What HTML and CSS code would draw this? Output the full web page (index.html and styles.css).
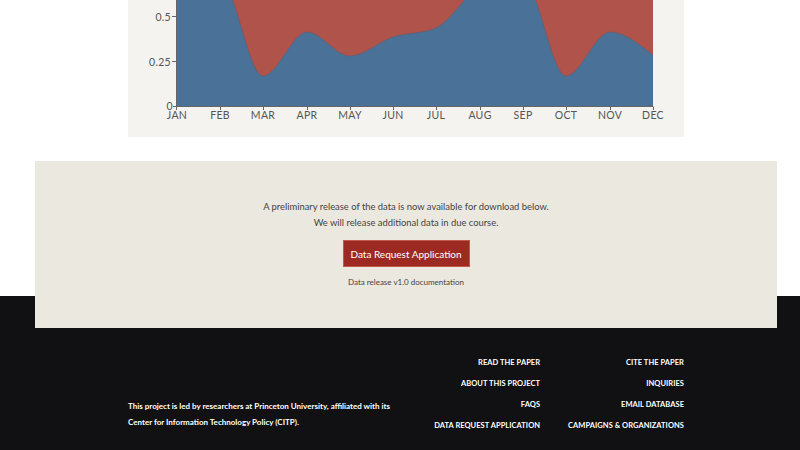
FILE: index.html
```html
<!DOCTYPE html>
<html lang="en">
<head>
<meta charset="utf-8">
<title>Data release</title>
<link rel="stylesheet" href="styles.css">
</head>
<body>
<div class="page">
  <section class="chart-card">
    <svg class="chart" width="556" height="137" viewBox="128 0 556 137" xmlns="http://www.w3.org/2000/svg">
      <rect x="177" y="0" width="476" height="106" fill="#b0534a"/>
      <path fill="#4a7197" d="M177,106 L177,-18 C191.3,-19 205.7,-20 220,-20 C234.3,-20 248.7,76 263,76 C277.7,76 292.3,32 307,32 C321.3,32 335.7,56 350,56 C364.3,56 378.7,41.6 393,37 C407.3,32.4 421.7,34 436,28 C450.7,21.8 465.3,-6.4 480,-12 C494.3,-17.4 508.7,-20 523,-20 C537.3,-20 551.7,76 566,76 C580.7,76 595.3,32 610,32 C624.3,32 638.7,43.5 653,55 L653,106 Z"/>
      <path fill="none" stroke="#6a5a6a" stroke-opacity="0.6" stroke-width="1" d="M177,-18 C191.3,-19 205.7,-20 220,-20 C234.3,-20 248.7,76 263,76 C277.7,76 292.3,32 307,32 C321.3,32 335.7,56 350,56 C364.3,56 378.7,41.6 393,37 C407.3,32.4 421.7,34 436,28 C450.7,21.8 465.3,-6.4 480,-12 C494.3,-17.4 508.7,-20 523,-20 C537.3,-20 551.7,76 566,76 C580.7,76 595.3,32 610,32 C624.3,32 638.7,43.5 653,55"/>
      <g stroke="#666" stroke-width="1" fill="none">
        <path d="M176.5,0 V106.5 H653"/>
        <path d="M172,16.5 H176.5 M172,61.5 H176.5 M173,106.5 H176.5"/>
        <path d="M176.5,106.5 V110 M220.5,106.5 V110 M263.5,106.5 V110 M307.5,106.5 V110 M350.5,106.5 V110 M393.5,106.5 V110 M436.5,106.5 V110 M480.5,106.5 V110 M523.5,106.5 V110 M566.5,106.5 V110 M610.5,106.5 V110 M653.5,106.5 V110"/>
      </g>
      <g class="ytick" text-anchor="end">
        <text x="171" y="20.5">0.5</text>
        <text x="171" y="65.5">0.25</text>
        <text x="173" y="109.5">0</text>
      </g>
      <g class="xtick" text-anchor="middle">
        <text x="177" y="118.5">JAN</text>
        <text x="220" y="118.5">FEB</text>
        <text x="263" y="118.5">MAR</text>
        <text x="307" y="118.5">APR</text>
        <text x="350" y="118.5">MAY</text>
        <text x="393" y="118.5">JUN</text>
        <text x="436" y="118.5">JUL</text>
        <text x="480" y="118.5">AUG</text>
        <text x="523" y="118.5">SEP</text>
        <text x="566" y="118.5">OCT</text>
        <text x="610" y="118.5">NOV</text>
        <text x="653" y="118.5">DEC</text>
      </g>
    </svg>
  </section>

  <section class="release">
    <p class="lead">A preliminary release of the data is now available for download below.<br>We will release additional data in due course.</p>
    <a class="btn" href="#">Data Request Application</a>
    <a class="doc" href="#">Data release v1.0 documentation</a>
  </section>
</div>

<footer class="footer">
  <div class="footer-inner">
    <p class="about">This project is led by researchers at Princeton University, affiliated with its<br>Center for Information Technology Policy (CITP).</p>
    <nav class="links">
      <a href="#">READ THE PAPER</a>
      <a href="#">CITE THE PAPER</a>
      <a href="#">ABOUT THIS PROJECT</a>
      <a href="#">INQUIRIES</a>
      <a href="#">FAQS</a>
      <a href="#">EMAIL DATABASE</a>
      <a href="#">DATA REQUEST APPLICATION</a>
      <a href="#">CAMPAIGNS &amp; ORGANIZATIONS</a>
    </nav>
  </div>
</footer>
</body>
</html>
```

FILE: styles.css
```css
* { box-sizing: border-box; }

html, body {
  margin: 0;
  padding: 0;
  background: #ffffff;
  font-family: Lato, "Open Sans", sans-serif;
}

.page {
  width: 742px;
  margin-left: 35px;
}

.chart-card {
  margin: 0 93px;
  height: 137px;
  background: #f4f3ef;
}

.chart {
  display: block;
}

.ytick text,
.xtick text {
  font-family: Lato, sans-serif;
  font-size: 10.5px;
  fill: #555555;
  letter-spacing: 0.3px;
}

.release {
  position: relative;
  z-index: 1;
  margin-top: 24px;
  margin-bottom: -32px;
  height: 167px;
  background: #ebe8e0;
  padding-top: 38px;
  display: flex;
  flex-direction: column;
  align-items: center;
  text-align: center;
}

.lead {
  margin: 0;
  font-size: 9.4px;
  line-height: 16px;
  color: #444444;
}

.btn {
  margin-top: 9px;
  height: 27px;
  width: 127px;
  display: flex;
  align-items: center;
  justify-content: center;
  background: #9c2a22;
  border: 1px solid #c4574c;
  color: #ffffff;
  font-size: 10px;
  text-decoration: none;
}

.doc {
  margin-top: 8px;
  font-size: 8px;
  line-height: 14px;
  color: #444444;
  text-decoration: none;
}

.footer {
  background: #111012;
  padding: 56px 0 40px;
}

.footer-inner {
  margin-left: 128px;
  width: 556px;
  display: flex;
  justify-content: space-between;
  align-items: flex-end;
}

.about {
  margin: 0 0 6px;
  font-size: 8px;
  line-height: 16px;
  font-weight: 700;
  color: #ffffff;
}

.links {
  display: grid;
  grid-template-columns: auto auto;
  column-gap: 28px;
  justify-items: end;
}

.links a {
  font-size: 7.5px;
  line-height: 21px;
  font-weight: 700;
  color: #ffffff;
  text-decoration: none;
  letter-spacing: 0.05px;
}
```
